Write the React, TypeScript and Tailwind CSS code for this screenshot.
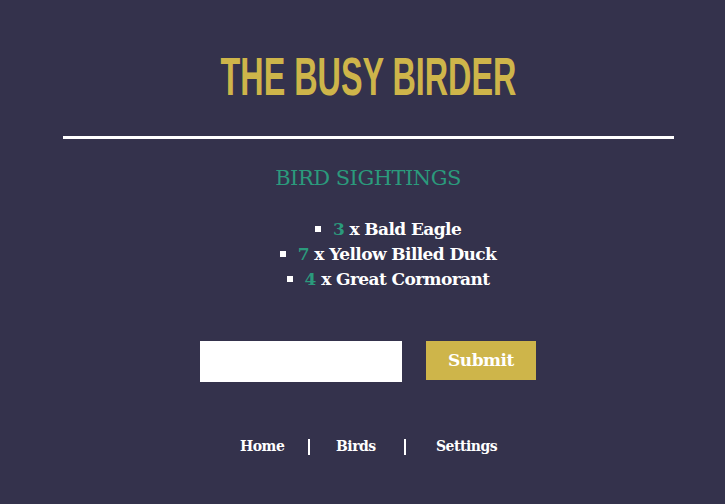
import React from "react";

const serif = { fontFamily: '"DejaVu Serif", "Liberation Serif", serif' };

export default function App() {
  const birds = [
    { n: 3, name: "Bald Eagle" },
    { n: 7, name: "Yellow Billed Duck" },
    { n: 4, name: "Great Cormorant" },
  ];
  return (
    <div className="min-h-[504px] w-full bg-[#34324c] pl-[11px]" style={serif}>
      <div className="flex flex-col items-center pt-[50px]">
        <h1
          className="scale-x-[0.61] text-[53px] font-bold leading-[54px] text-[#ceb54a] whitespace-nowrap"
          style={{ fontFamily: '"Liberation Sans", sans-serif' }}
        >
          THE BUSY BIRDER
        </h1>
        <div className="mt-[32px] h-[3px] w-[611px] bg-white" />
        <h2 className="mt-[25px] text-[21px] leading-[28px] text-[#2b9a7c] tracking-[-0.5px]">BIRD SIGHTINGS</h2>
        <ul className="mt-[25px] pl-[40px] text-[17px] font-bold leading-[25px] text-white text-center tracking-[-0.6px]">
          {birds.map((b) => (
            <li key={b.name}>
              <span className="mr-[12px] inline-block h-[6px] w-[6px] bg-white align-[3px]" />
              <span className="text-[#2b9a7c]">{b.n}</span> x {b.name}
            </li>
          ))}
        </ul>
        <div className="mt-[49px] flex items-start gap-[24px]">
          <input className="h-[41px] w-[202px] bg-white outline-none" />
          <button className="h-[39px] w-[110px] bg-[#ceb54a] text-[17px] font-bold text-white tracking-[-0.5px]">
            Submit
          </button>
        </div>
        <nav className="mt-[54px] flex items-center text-[14px] font-bold text-white tracking-[-0.5px]">
          <span className="w-[42px] text-center">Home</span>
          <span className="mx-[26px] h-[16px] w-[2px] bg-white" />
          <span className="w-[38px] text-center">Birds</span>
          <span className="mx-[30px] h-[16px] w-[2px] bg-white" />
          <span className="w-[60px] text-center">Settings</span>
        </nav>
      </div>
    </div>
  );
}
